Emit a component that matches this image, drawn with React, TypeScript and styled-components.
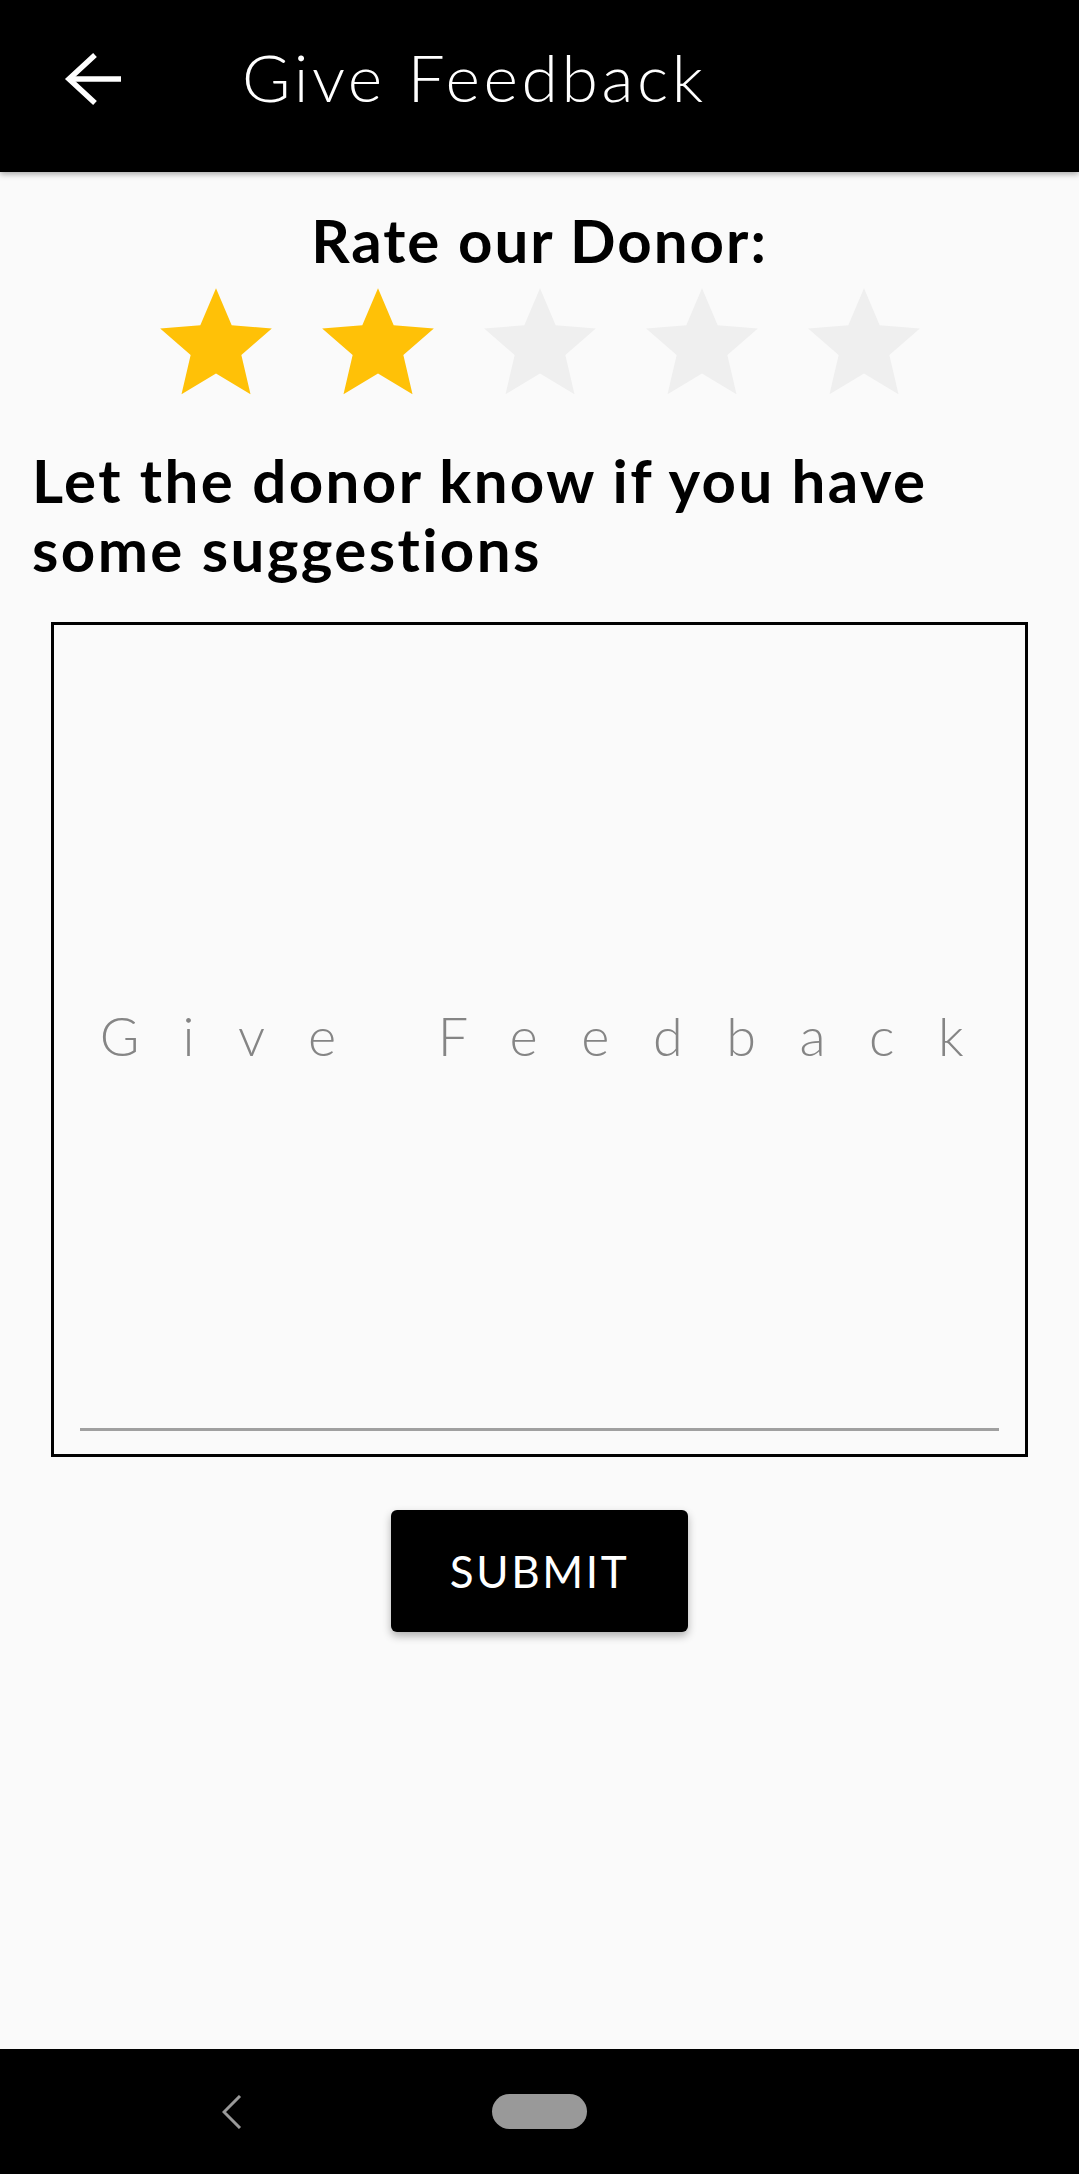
import React from "react";
import styled, { createGlobalStyle } from "styled-components";

const GlobalStyle = createGlobalStyle`
  html, body {
    margin: 0;
    padding: 0;
    background: #fafafa;
  }
  * { box-sizing: border-box; }
  #root { min-height: 100vh; }
`;

const Page = styled.div`
  display: flex;
  flex-direction: column;
  min-height: 100vh;
  font-family: "Lato", "Open Sans", sans-serif;
  background: #fafafa;
`;

const AppBar = styled.header`
  display: flex;
  align-items: center;
  height: 172px;
  padding: 0 0 18px 64px;
  background: #000;
  box-shadow: 0 2px 6px rgba(0, 0, 0, 0.35);
  position: relative;
  z-index: 1;
`;

const BackButton = styled.button`
  display: flex;
  margin-top: 4px;
  padding: 0;
  border: 0;
  background: transparent;
  cursor: pointer;
`;

const AppTitle = styled.h1`
  margin: 0 0 0 118px;
  font-family: "Lato", sans-serif;
  font-weight: 300;
  font-size: 66px;
  line-height: 1.2;
  letter-spacing: 3.6px;
  color: #fff;
`;

const Main = styled.main`
  flex: 1;
  display: flex;
  flex-direction: column;
  padding: 32px 0 56px;
`;

const RateTitle = styled.h2`
  margin: 0;
  text-align: center;
  font-weight: 700;
  font-size: 60px;
  line-height: 72px;
  letter-spacing: 2px;
  color: #000;
`;

const StarRow = styled.div`
  display: flex;
  justify-content: center;
  gap: 28px;
  margin-top: 1px;
`;

const StarButton = styled.button<{ $on: boolean }>`
  display: flex;
  width: 134px;
  height: 134px;
  padding: 0;
  border: 0;
  background: transparent;
  color: ${(p) => (p.$on ? "#ffc107" : "#efefef")};
  cursor: pointer;
`;

const Prompt = styled.h3`
  margin: 35px 0 0 32px;
  font-weight: 700;
  font-size: 60px;
  line-height: 69px;
  letter-spacing: 2.4px;
  color: #000;
`;

const FeedbackBox = styled.div`
  display: flex;
  flex-direction: column;
  height: 835px;
  margin: 38px 51px 0;
  padding: 0 26px 23px;
  border: 3px solid #000;
`;

const Field = styled.div`
  flex: 1;
  display: flex;
  align-items: center;
  justify-content: center;
  padding-top: 20px;
  border-bottom: 3px solid #a0a0a0;
`;

const Hint = styled.span`
  padding-left: 28px;
  font-weight: 300;
  font-size: 54px;
  line-height: 1.2;
  letter-spacing: 43.5px;
  color: #858585;
  white-space: nowrap;
`;

const SubmitButton = styled.button`
  align-self: center;
  width: 297px;
  height: 122px;
  margin-top: 53px;
  border: 0;
  border-radius: 6px;
  background: #000;
  color: #fff;
  font-family: "Lato", sans-serif;
  font-weight: 400;
  font-size: 44px;
  letter-spacing: 2.6px;
  box-shadow: 0 4px 8px rgba(0, 0, 0, 0.3);
  cursor: pointer;
`;

const NavBar = styled.nav`
  display: flex;
  align-items: center;
  height: 125px;
  padding-left: 222px;
  gap: 250px;
  background: #000;
`;

const HomePill = styled.div`
  width: 95px;
  height: 35px;
  border-radius: 17.5px;
  background: #999;
`;

const STAR =
  "M12 17.27L18.18 21l-1.64-7.03L22 9.24l-7.19-.61L12 2 9.19 8.63 2 9.24l5.46 4.73L5.82 21z";

export default function App() {
  const rating = 2;
  return (
    <Page>
      <GlobalStyle />
      <AppBar>
        <BackButton aria-label="Back">
          <svg width="60" height="56" viewBox="0 0 60 56" fill="none">
            <path d="M4 28H57" stroke="#fff" strokeWidth="5.5" />
            <path
              d="M31 4L5 28L31 52"
              stroke="#fff"
              strokeWidth="5.5"
              strokeLinejoin="miter"
            />
          </svg>
        </BackButton>
        <AppTitle>Give Feedback</AppTitle>
      </AppBar>
      <Main>
        <RateTitle>Rate our Donor:</RateTitle>
        <StarRow>
          {[1, 2, 3, 4, 5].map((n) => (
            <StarButton key={n} $on={n <= rating} aria-label={`${n} stars`}>
              <svg width="134" height="134" viewBox="0 0 24 24">
                <path d={STAR} fill="currentColor" />
              </svg>
            </StarButton>
          ))}
        </StarRow>
        <Prompt>
          Let the donor know if you have
          <br />
          some suggestions
        </Prompt>
        <FeedbackBox>
          <Field>
            <Hint>Give Feedback</Hint>
          </Field>
        </FeedbackBox>
        <SubmitButton>SUBMIT</SubmitButton>
      </Main>
      <NavBar>
        <svg width="20" height="34" viewBox="0 0 20 34" fill="none">
          <path d="M18 1L2 17L18 33" stroke="#999" strokeWidth="3" />
        </svg>
        <HomePill />
      </NavBar>
    </Page>
  );
}
